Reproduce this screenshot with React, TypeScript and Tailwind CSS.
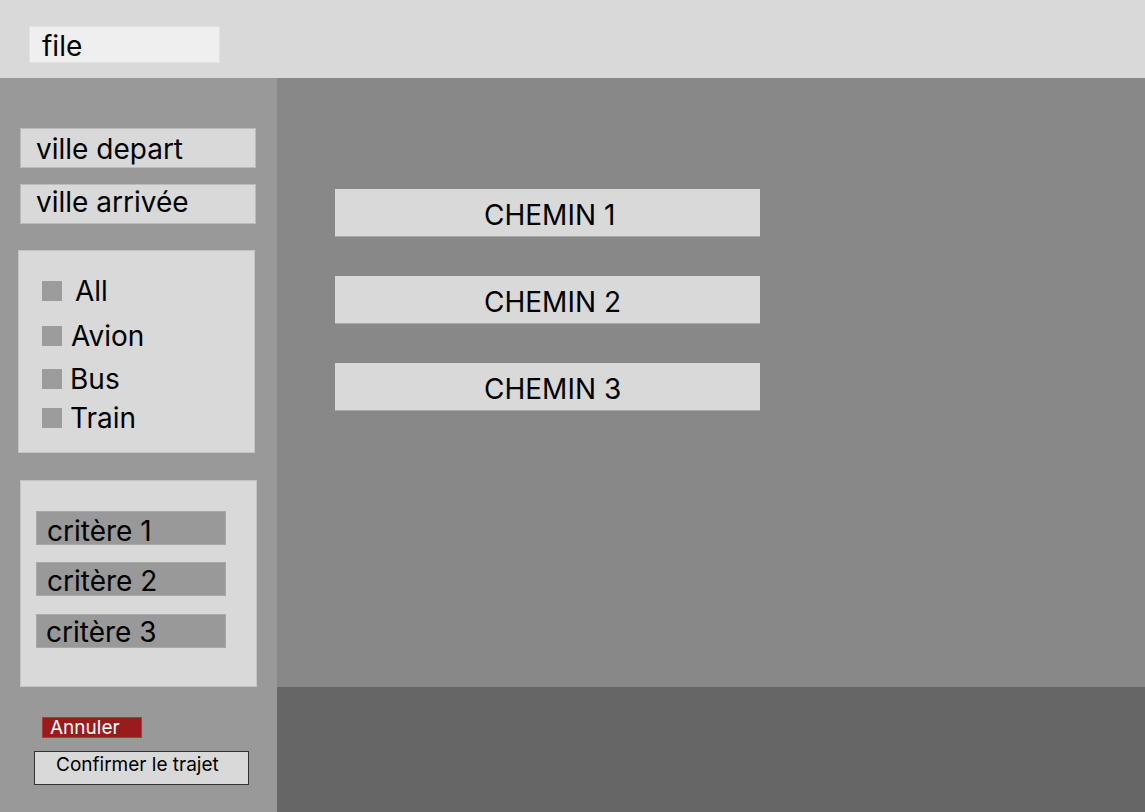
import React from "react";

const Check: React.FC<{ label: string; gap: string; mt: string }> = ({ label, gap, mt }) => (
  <div className={`flex items-center ${mt}`}>
    <span className="w-[20px] h-[20px] bg-[#9c9c9c] shrink-0" />
    <span className={`${gap} text-[28px] leading-[30px] text-black`}>{label}</span>
  </div>
);

const Critere: React.FC<{ label: string; mt: string; pl: string; tmt: string }> = ({ label, mt, pl, tmt }) => (
  <div className={`w-[190px] h-[34px] bg-[#999999] border border-[#a8a8a8] flex items-center ${pl} ${mt}`}>
    <span className={`text-[28px] leading-[30px] text-black ${tmt}`}>{label}</span>
  </div>
);

const Chemin: React.FC<{ label: string }> = ({ label }) => (
  <div className="w-[425px] h-[48px] bg-[#d9d9d9] border-b border-[#a9a9a9] flex items-center pl-[149px]">
    <span className="text-[28px] leading-[30px] text-black mt-[4px]">{label}</span>
  </div>
);

const App: React.FC = () => {
  return (
    <div className="w-[1145px] h-[812px] flex flex-col overflow-hidden font-['Inter',sans-serif]">
      {/* Top bar */}
      <div className="h-[78px] bg-[#d9d9d9] shrink-0 pt-[26px] pl-[29px]">
        <div className="w-[191px] h-[37px] bg-[#efefef] border border-[#e2e2e2] flex items-center pl-[12px]">
          <span className="text-[28px] leading-[30px] text-black mt-[3px]">file</span>
        </div>
      </div>

      <div className="flex flex-1">
        {/* Sidebar */}
        <div className="w-[277px] bg-[#999999] shrink-0 pt-[50px] flex flex-col">
          <div className="ml-[20px] w-[236px] h-[40px] bg-[#d9d9d9] border border-[#bcbcbc] flex items-center pl-[15px]">
            <span className="text-[28px] leading-[30px] text-black mt-[1px]">ville depart</span>
          </div>
          <div className="ml-[20px] mt-[16px] w-[236px] h-[40px] bg-[#d9d9d9] border border-[#bcbcbc] flex items-center pl-[15px]">
            <span className="text-[28px] leading-[30px] text-black -mt-[4px]">ville arrivée</span>
          </div>

          {/* Transport filters */}
          <div className="ml-[18px] mt-[26px] w-[237px] h-[203px] bg-[#d9d9d9] border border-[#c4c4c4] pl-[23px] pt-[25px]">
            <Check label="All" gap="ml-[13px]" mt="mt-0" />
            <Check label="Avion" gap="ml-[9px]" mt="mt-[15px]" />
            <Check label="Bus" gap="ml-[8px]" mt="mt-[13px]" />
            <Check label="Train" gap="ml-[8px]" mt="mt-[9px]" />
          </div>

          {/* Criteria */}
          <div className="ml-[20px] mt-[27px] w-[237px] h-[207px] bg-[#d9d9d9] border border-[#c4c4c4] pl-[15px] pt-[30px]">
            <Critere label="critère 1" mt="mt-0" pl="pl-[10px]" tmt="mt-[5px]" />
            <Critere label="critère 2" mt="mt-[17px]" pl="pl-[10px]" tmt="mt-[4px]" />
            <Critere label="critère 3" mt="mt-[18px]" pl="pl-[9px]" tmt="mt-[1px]" />
          </div>

          {/* Actions */}
          <div className="ml-[42px] mt-[30px] w-[100px] h-[21px] bg-[#991b1b] border border-[#b03a3a] flex items-center pl-[7px]">
            <span className="text-[19px] leading-[20px] text-white">Annuler</span>
          </div>
          <div className="ml-[34px] mt-[13px] w-[215px] h-[34px] bg-[#d9d9d9] border border-[#333333] flex items-start pl-[21px] pt-[1px]">
            <span className="text-[19px] leading-[24px] text-black">Confirmer le trajet</span>
          </div>
        </div>

        {/* Right side */}
        <div className="flex-1 flex flex-col">
          <div className="h-[609px] bg-[#888888] pl-[58px] pt-[111px] flex flex-col gap-[39px]">
            <Chemin label="CHEMIN 1" />
            <Chemin label="CHEMIN 2" />
            <Chemin label="CHEMIN 3" />
          </div>
          <div className="flex-1 bg-[#666666]" />
        </div>
      </div>
    </div>
  );
};

export default App;
